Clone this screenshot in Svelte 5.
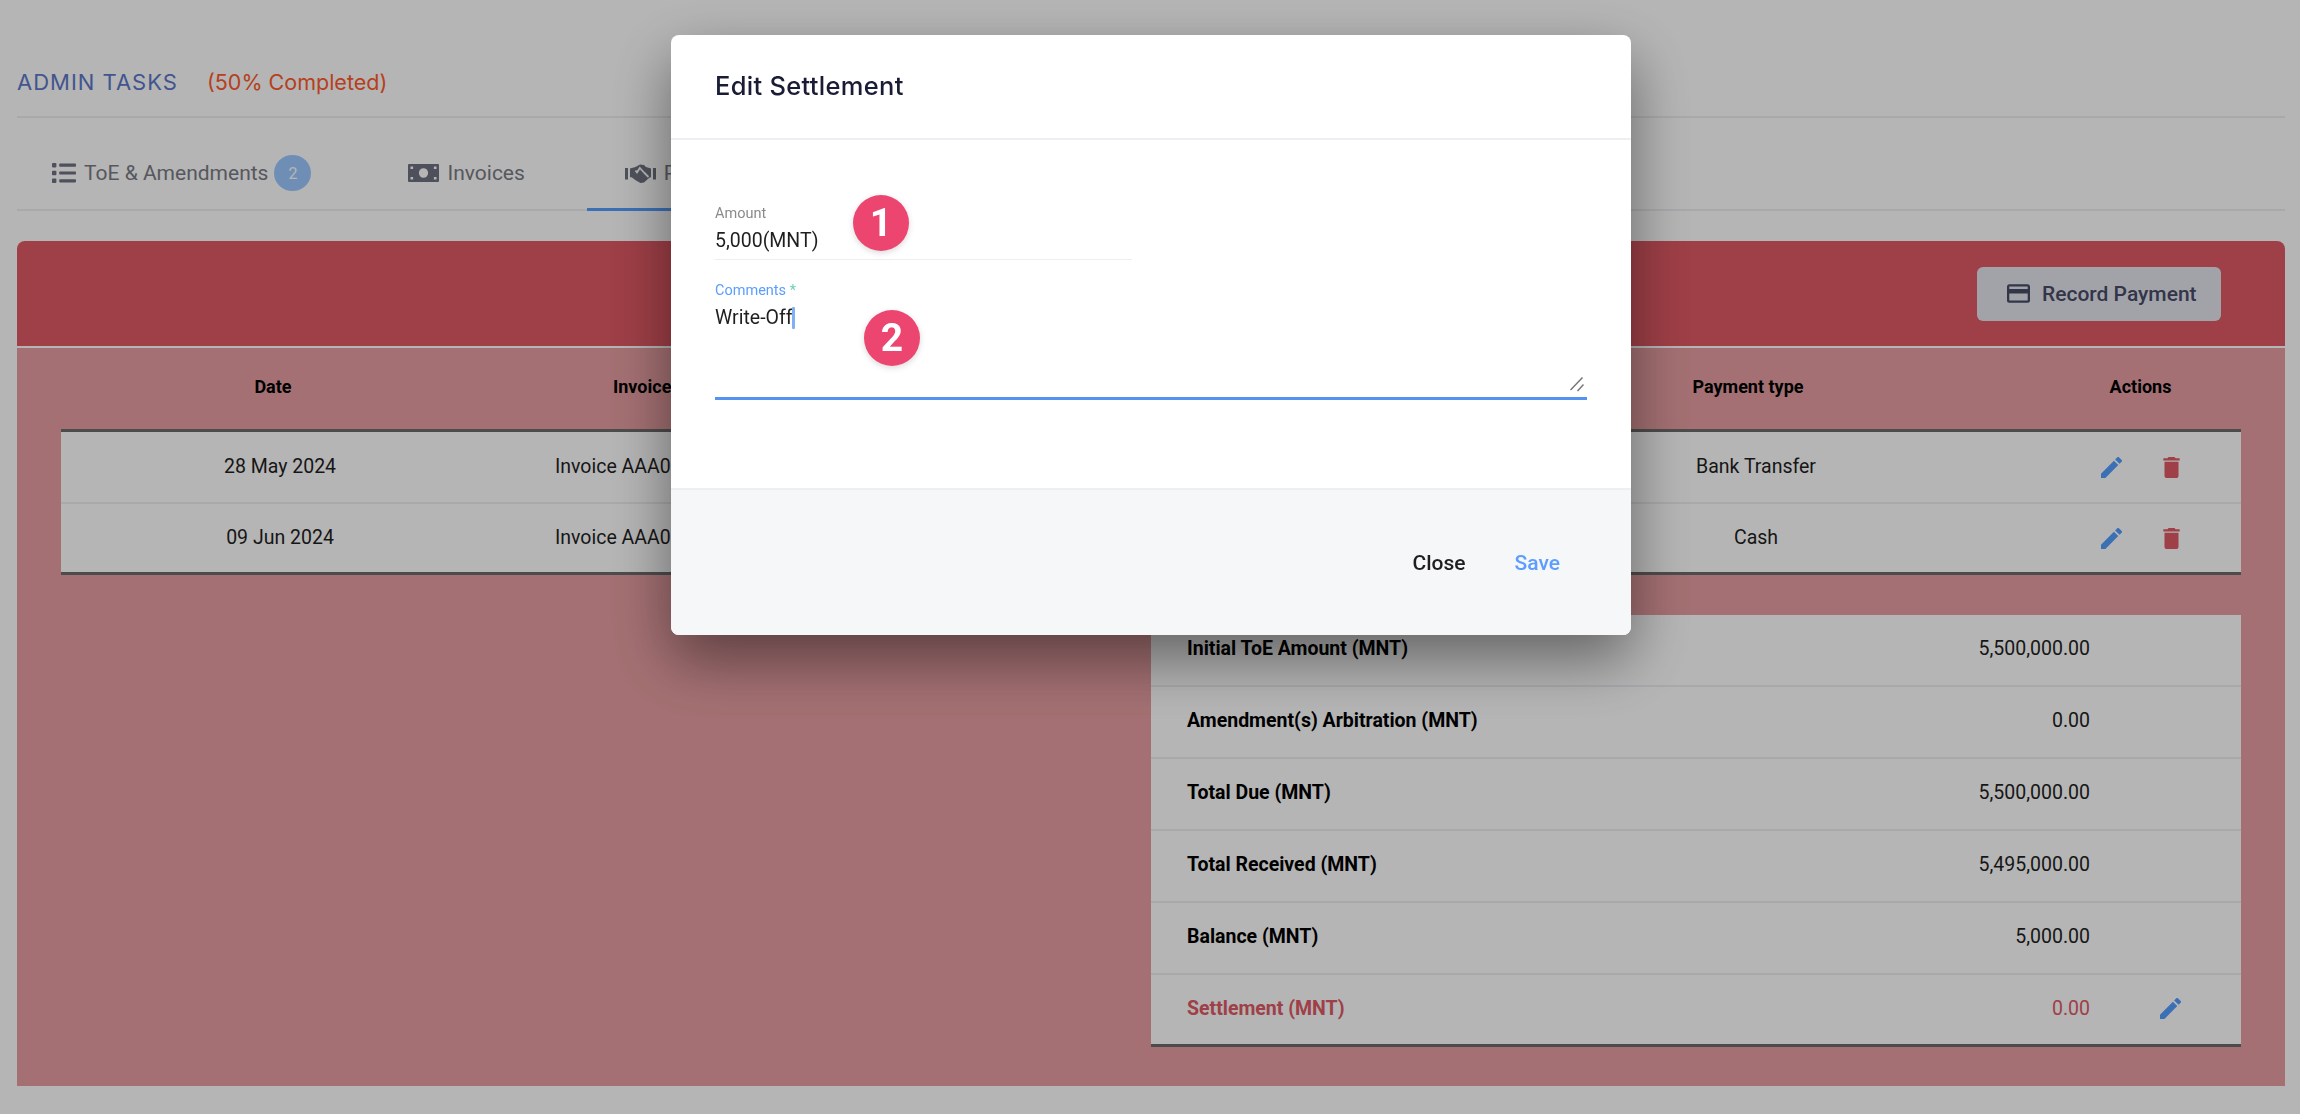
<script lang="ts">
  const editPath = 'M3 17.25V21h3.75L17.81 9.94l-3.75-3.75L3 17.25zM20.71 7.04c.39-.39.39-1.02 0-1.41l-2.34-2.34c-.39-.39-1.02-.39-1.41 0l-1.83 1.83 3.75 3.75 1.83-1.83z';
  const trashPath = 'M6 19c0 1.1.9 2 2 2h8c1.1 0 2-.9 2-2V7H6v12zM19 4h-3.5l-1-1h-5l-1 1H5v2h14V4z';

  const payments = [
    { date: '28 May 2024', invoice: 'Invoice AAA001', type: 'Bank Transfer' },
    { date: '09 Jun 2024', invoice: 'Invoice AAA001', type: 'Cash' }
  ];

  const summary = [
    { label: 'Initial ToE Amount (MNT)', value: '5,500,000.00' },
    { label: 'Amendment(s) Arbitration (MNT)', value: '0.00' },
    { label: 'Total Due (MNT)', value: '5,500,000.00' },
    { label: 'Total Received (MNT)', value: '5,495,000.00' },
    { label: 'Balance (MNT)', value: '5,000.00' }
  ];
</script>

<div class="page">
  <header class="title-row">
    <h1>ADMIN TASKS</h1>
    <span class="progress">(50% Completed)</span>
  </header>

  <nav class="tabs">
    <div class="tab">
      <svg class="ic-list" viewBox="0 0 24 20" fill="currentColor" aria-hidden="true">
        <rect x="0" y="0" width="4.4" height="4.4" rx="0.8" />
        <rect x="0" y="7.8" width="4.4" height="4.4" rx="0.8" />
        <rect x="0" y="15.6" width="4.4" height="4.4" rx="0.8" />
        <rect x="7.2" y="0.6" width="16.8" height="3.2" rx="0.8" />
        <rect x="7.2" y="8.4" width="16.8" height="3.2" rx="0.8" />
        <rect x="7.2" y="16.2" width="16.8" height="3.2" rx="0.8" />
      </svg>
      <span>ToE &amp; Amendments</span>
      <span class="count">2</span>
    </div>
    <div class="tab">
      <svg class="ic-money" viewBox="0 0 31 18" aria-hidden="true">
        <path fill="currentColor" fill-rule="evenodd" d="M1 0h29a1 1 0 0 1 1 1v16a1 1 0 0 1-1 1H1a1 1 0 0 1-1-1V1a1 1 0 0 1 1-1zM15.5 4.2a4.6 4.8 0 1 0 0 9.6a4.6 4.8 0 1 0 0-9.6zM2.5 2.5v2.6h2.6V2.5zM25.9 2.5v2.6h2.6V2.5zM2.5 12.9v2.6h2.6v-2.6zM25.9 12.9v2.6h2.6v-2.6z" />
      </svg>
      <span>Invoices</span>
    </div>
    <div class="tab active">
      <svg class="ic-hands" viewBox="0 0 31 19" aria-hidden="true">
        <path fill="currentColor" d="M0 4h3v11.500H0zM28 4h3v11.500h-3zM5 4.500 10.500 3 15 0.500 19 1 21 3 26 4.500V13l-2 1-5 4.500-3.500.5-4.500-2.500L7 13.500 5 13z" />
        <path fill="none" stroke="#ffffff" stroke-width="1.800" d="M19 8.500 14.800 4 12 8.500 10.500 6.500M19 8.500l4.500 4.500" />
      </svg>
      <span>Payments</span>
    </div>
  </nav>

  <section class="card">
    <div class="card-head">
      <button type="button" class="record-btn">
        <svg viewBox="2 4 20 16" fill="currentColor" aria-hidden="true">
          <path d="M20 4H4c-1.110 0-1.990.890-1.990 2L2 18c0 1.110.890 2 2 2h16c1.110 0 2-.890 2-2V6c0-1.110-.890-2-2-2zm0 14H4v-6h16v6zm0-10H4V6h16v2z" />
        </svg>
        Record Payment
      </button>
    </div>

    <div class="card-body">
      <div class="thead">
        <span class="th-date">Date</span>
        <span class="th-invoice">Invoice</span>
        <span class="th-type">Payment type</span>
        <span class="th-actions">Actions</span>
      </div>

      <div class="payments">
        {#each payments as p}
          <div class="pay-row">
            <span class="td-date">{p.date}</span>
            <span class="td-invoice">{p.invoice}</span>
            <span class="td-type">{p.type}</span>
            <span class="td-actions">
              <svg class="ic-edit" viewBox="3 3 18 18" fill="currentColor" aria-hidden="true"><path d={editPath} /></svg>
              <svg class="ic-trash" viewBox="5 3 14 18" fill="currentColor" aria-hidden="true"><path d={trashPath} /></svg>
            </span>
          </div>
        {/each}
      </div>

      <div class="summary">
        {#each summary as row}
          <div class="sum-row">
            <strong>{row.label}</strong>
            <span class="amount">{row.value}</span>
            <span class="sum-action"></span>
          </div>
        {/each}
        <div class="sum-row settlement">
          <strong>Settlement (MNT)</strong>
          <span class="amount">0.00</span>
          <span class="sum-action">
            <svg class="ic-edit" viewBox="3 3 18 18" fill="currentColor" aria-hidden="true"><path d={editPath} /></svg>
          </span>
        </div>
      </div>
    </div>
  </section>
</div>

<div class="backdrop"></div>

<div class="modal" role="dialog" aria-labelledby="modal-title">
  <h2 id="modal-title">Edit Settlement</h2>

  <div class="modal-body">
    <div class="field readonly">
      <span class="field-label">Amount</span>
      <span class="field-value">5,000(MNT)</span>
    </div>
    <div class="field comments">
      <span class="field-label">Comments <i>*</i></span>
      <span class="field-value">Write-Off<b class="caret"></b></span>
      <svg class="resize" viewBox="0 0 14 15" aria-hidden="true">
        <path d="M0.500 13 12.500 0.500M7.500 14 13.500 7.500" stroke="#777" stroke-width="1.500" fill="none" />
      </svg>
    </div>
    <span class="marker m1">1</span>
    <span class="marker m2">2</span>
  </div>

  <footer class="modal-foot">
    <button type="button" class="link close">Close</button>
    <button type="button" class="link save">Save</button>
  </footer>
</div>

<style>
  :global(body) {
    margin: 0;
    background: #fff;
    font-family: Roboto, "Liberation Sans", sans-serif;
  }
  .page {
    box-sizing: border-box;
    height: 1114px;
    padding: 0 15px 0 17px;
    overflow: hidden;
  }

  .title-row {
    box-sizing: border-box;
    height: 118px;
    padding-top: 63px;
    display: flex;
    align-items: flex-start;
    gap: 29px;
    border-bottom: 2px solid #eeeef3;
    font-family: Inter, "Liberation Sans", sans-serif;
  }
  h1 {
    margin: 0;
    font-size: 22px;
    line-height: 38px;
    font-weight: 400;
    letter-spacing: 1px;
    color: #5d78c9;
  }
  .progress {
    font-size: 21.500px;
    line-height: 38px;
    color: #ff5a2b;
  }

  .tabs {
    box-sizing: border-box;
    height: 93px;
    display: flex;
    align-items: stretch;
    gap: 24px;
    border-bottom: 2px solid #eeeef3;
  }
  .tab {
    box-sizing: border-box;
    height: 93px;
    padding: 20px 38px 0 35px;
    display: flex;
    align-items: center;
    gap: 8px;
    font-size: 21px;
    color: #7a7c85;
    border-bottom: 3px solid transparent;
  }
  .tab.active {
    border-bottom-color: #539eff;
    padding-left: 38px;
  }
  .tab svg {
    color: #6f7381;
    display: block;
    flex: none;
  }
  .ic-list { width: 24px; height: 20px; }
  .ic-money { width: 31px; height: 18px; }
  .ic-hands { width: 31px; height: 19px; }
  .count {
    width: 37px;
    height: 36px;
    margin-left: -2px;
    border-radius: 50%;
    background: #9cc9ff;
    color: #fff;
    font-size: 16px;
    display: flex;
    align-items: center;
    justify-content: center;
  }

  .card {
    margin-top: 30px;
  }
  .card-head {
    box-sizing: border-box;
    height: 105px;
    padding-right: 64px;
    display: flex;
    align-items: center;
    justify-content: flex-end;
    background: #e05964;
    border-radius: 8px 8px 0 0;
  }
  .record-btn {
    box-sizing: border-box;
    width: 244px;
    height: 54px;
    padding: 0 0 0 30px;
    display: flex;
    align-items: center;
    gap: 12px;
    background: #e4e6ee;
    border: 0;
    border-radius: 6px;
    color: #484c68;
    font: 500 21px Roboto, sans-serif;
  }
  .record-btn svg {
    width: 23px;
    height: 19px;
  }

  .card-body {
    box-sizing: border-box;
    height: 738px;
    margin-top: 2px;
    padding: 0 44px;
    background: #e79ea2;
  }

  .thead {
    box-sizing: border-box;
    height: 81px;
    padding-bottom: 4px;
    display: grid;
    grid-template-columns: 424px 1063px 400px 92px 201px;
    align-items: center;
    font-size: 18px;
    font-weight: 700;
    color: #000;
  }
  .th-date { text-align: center; grid-column: 1; }
  .th-invoice { padding-left: 128px; grid-column: 2; }
  .th-type { text-align: center; grid-column: 3; }
  .th-actions { text-align: center; grid-column: 5; }

  .payments {
    border-top: 3px solid #6c6c6c;
    border-bottom: 3px solid #6c6c6c;
    background: #fff;
  }
  .pay-row {
    height: 70px;
    display: grid;
    grid-template-columns: 438px 498px 559px 400px 285px;
    align-items: center;
    font-size: 19.500px;
    color: #1f1f1f;
  }
  .pay-row + .pay-row {
    height: 68px;
    border-top: 2px solid #eeeef3;
  }
  .td-date,
  .td-invoice,
  .td-type {
    margin-top: -2px;
  }
  .td-date { text-align: center; }
  .td-invoice { padding-left: 56px; grid-column: 2; }
  .td-type { text-align: center; grid-column: 4; }
  .td-actions {
    grid-column: 5;
    padding-left: 145px;
    display: flex;
    align-items: center;
    gap: 41px;
  }
  .ic-edit {
    width: 21px;
    height: 21px;
    color: #539eff;
    display: block;
  }
  .ic-trash {
    width: 17px;
    height: 21px;
    color: #e05964;
    display: block;
  }

  .summary {
    margin: 40px 0 0 1090px;
    background: #fff;
    border-bottom: 3px solid #6c6c6c;
  }
  .sum-row {
    box-sizing: border-box;
    height: 72px;
    padding: 0 0 3px 36px;
    display: grid;
    grid-template-columns: 1fr auto 151px;
    align-items: center;
    border-bottom: 2px solid #eeeef3;
    font-size: 19.500px;
    color: #1f1f1f;
  }
  .sum-row strong {
    font-weight: 700;
    color: #000;
  }
  .sum-row.settlement {
    height: 69px;
    border-bottom: 0;
  }
  .settlement strong,
  .settlement .amount {
    color: #e05964;
  }
  .sum-action {
    padding-left: 70px;
  }

  .backdrop {
    position: fixed;
    inset: 0;
    background: rgba(0, 0, 0, 0.29);
  }

  .modal {
    position: fixed;
    left: 671px;
    top: 35px;
    width: 960px;
    background: #fff;
    border-radius: 8px;
    box-shadow: 0 24px 60px rgba(0, 0, 0, 0.45);
    overflow: hidden;
  }
  h2 {
    box-sizing: border-box;
    height: 105px;
    margin: 0;
    padding: 0 44px 3px;
    display: flex;
    align-items: center;
    border-bottom: 2px solid #eeeef3;
    font: 500 25.500px Inter, sans-serif;
    letter-spacing: 0.3px;
    color: #1a1c36;
  }
  .modal-body {
    box-sizing: border-box;
    height: 348px;
    padding: 64px 44px 0;
    position: relative;
  }
  .field {
    display: flex;
    flex-direction: column;
  }
  .field-label {
    font-size: 14.500px;
    line-height: 18px;
    color: #8a8a8a;
  }
  .readonly .field-label {
    margin-top: 1px;
  }
  .field-value {
    font-size: 19.500px;
    line-height: 24px;
    margin-top: 6px;
    color: #1f1f1f;
  }
  .readonly {
    box-sizing: border-box;
    width: 417px;
    height: 56px;
    border-bottom: 1px solid #eeeeee;
  }
  .comments {
    box-sizing: border-box;
    height: 118px;
    margin-top: 22px;
    border-bottom: 3px solid #5592f2;
    position: relative;
  }
  .comments .field-label {
    color: #5c9dff;
  }
  .comments i {
    font-style: normal;
    color: #6fd0b8;
  }
  .caret {
    display: inline-block;
    width: 3.500px;
    height: 22px;
    margin-left: -1px;
    vertical-align: -5px;
    background: #7fb0f5;
    border-radius: 1px;
  }
  .resize {
    position: absolute;
    right: 3px;
    bottom: 5px;
    width: 14px;
    height: 15px;
  }
  .marker {
    position: absolute;
    width: 56px;
    height: 56px;
    border-radius: 50%;
    background: #ec4670;
    color: #fff;
    font: 700 39px Roboto, sans-serif;
    display: flex;
    align-items: center;
    justify-content: center;
    box-shadow: 0 2px 6px rgba(0, 0, 0, 0.15);
  }
  .m1 { left: 182px; top: 55px; }
  .m2 { left: 193px; top: 170px; }

  .modal-foot {
    box-sizing: border-box;
    height: 147px;
    padding-right: 71px;
    display: flex;
    align-items: center;
    justify-content: flex-end;
    gap: 49px;
    border-top: 2px solid #eeeef3;
    background: #f6f7f9;
  }
  .link {
    padding: 0;
    border: 0;
    background: none;
    font: 500 21px Roboto, sans-serif;
  }
  .close { color: #1f1f1f; }
  .save { color: #5c9dff; }
</style>
